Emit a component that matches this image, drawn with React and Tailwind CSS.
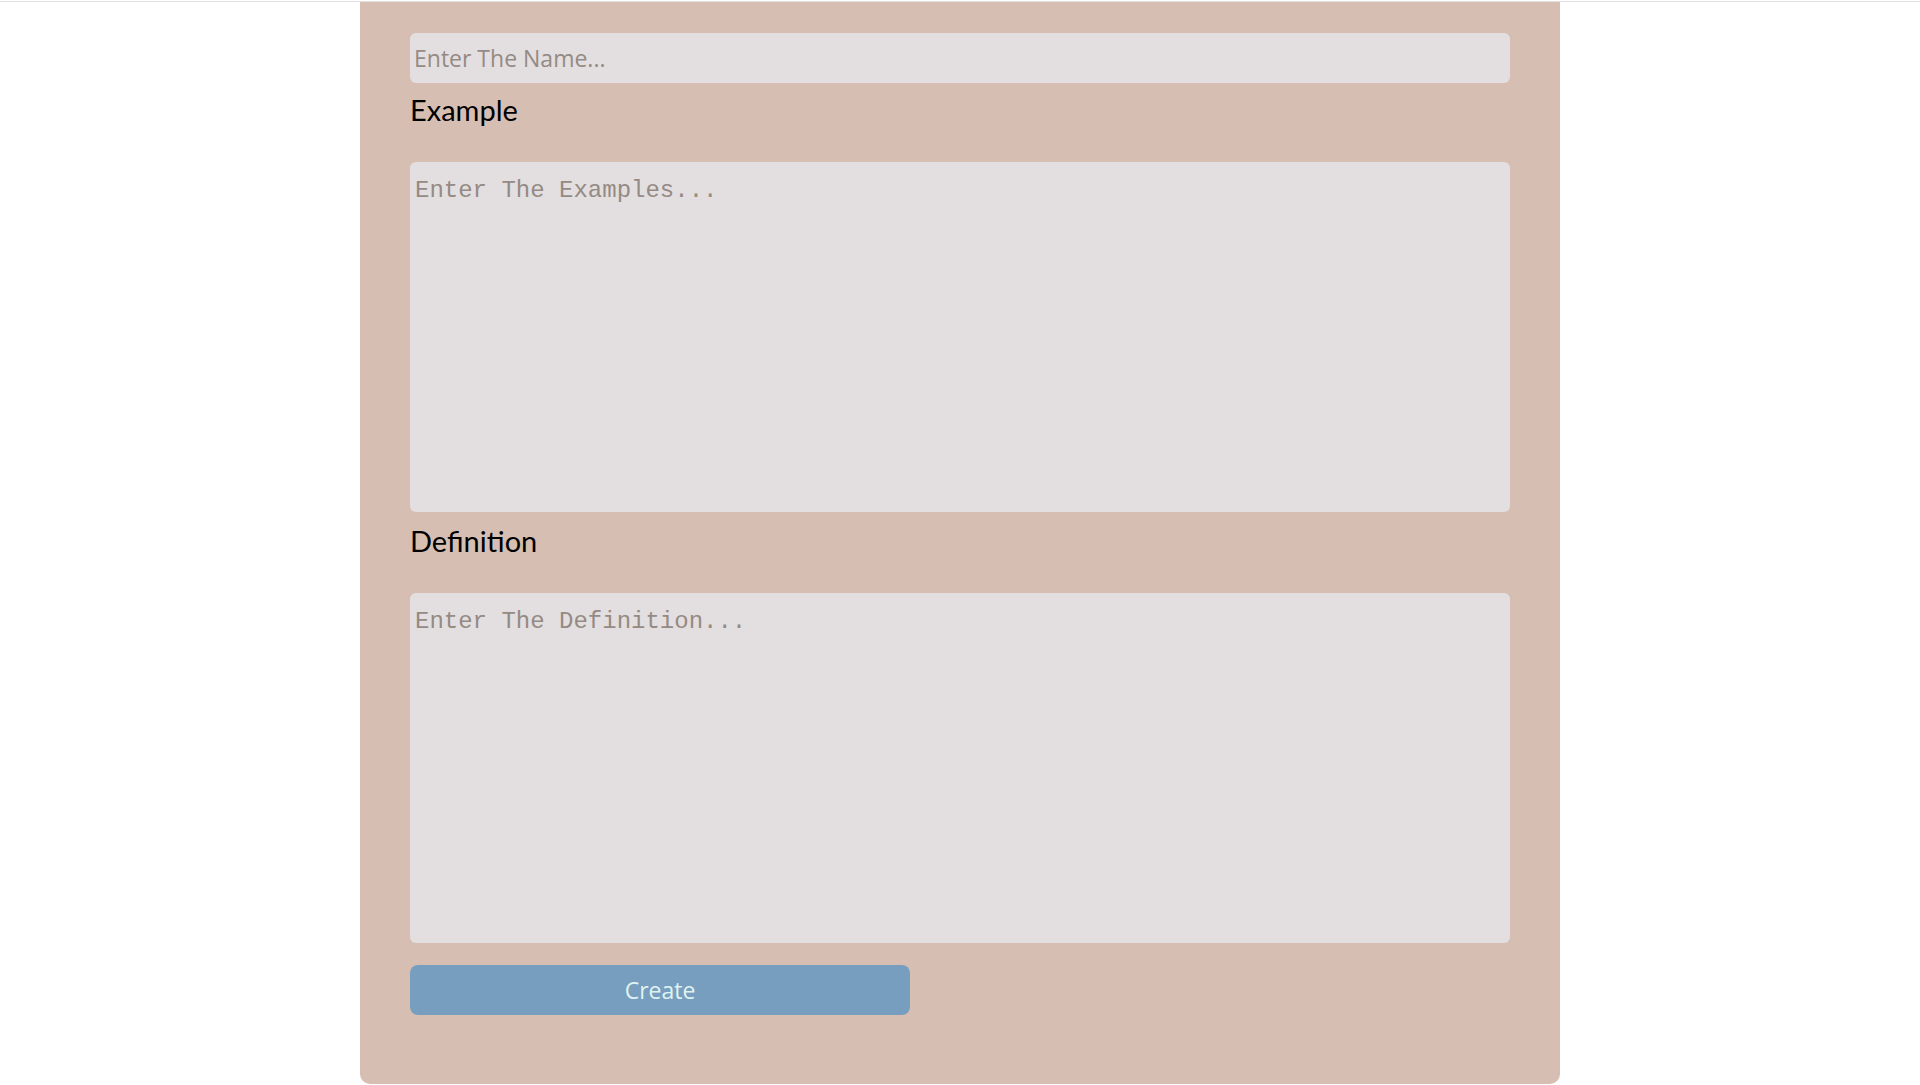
import { useState } from 'react'

export default function App() {
  const [name, setName] = useState('')
  const [examples, setExamples] = useState('')
  const [definition, setDefinition] = useState('')

  return (
    <div className="min-h-[1085px] bg-white">
      {/* top rule */}
      <div className="h-px bg-white" />
      <div className="h-px bg-[#e0e0e0]" />

      {/* Form panel */}
      <div className="mx-auto w-[1200px] rounded-b-[10px] bg-[#d6bfb2] px-[50px] pt-[31px] pb-[69px]">
        <input
          value={name}
          onChange={(e) => setName(e.target.value)}
          placeholder="Enter The Name..."
          className="block h-[50px] w-full rounded-[6px] bg-[#e3dfe0] px-[4px] font-['Open_Sans',sans-serif] text-[23px] text-black outline-none placeholder:text-[#958a84]"
        />

        <div className="mt-[10px] mb-[35px] font-['Lato',sans-serif] text-[29px] leading-[34px] text-black">
          Example
        </div>

        <textarea
          value={examples}
          onChange={(e) => setExamples(e.target.value)}
          placeholder="Enter The Examples..."
          className="block h-[350px] w-full resize-none rounded-[6px] bg-[#e3dfe0] p-[5px] font-['Liberation_Mono',monospace] text-[24px] leading-[48px] text-black outline-none placeholder:text-[#958a84]"
        />

        <div className="mt-[12px] mb-[35px] font-['Lato',sans-serif] text-[29px] leading-[34px] text-black">
          Definition
        </div>

        <textarea
          value={definition}
          onChange={(e) => setDefinition(e.target.value)}
          placeholder="Enter The Definition..."
          className="block h-[350px] w-full resize-none rounded-[6px] bg-[#e3dfe0] p-[5px] font-['Liberation_Mono',monospace] text-[24px] leading-[48px] text-black outline-none placeholder:text-[#958a84]"
        />

        <button className="mt-[22px] block h-[50px] w-[500px] rounded-[8px] bg-[#789ebf] font-['Open_Sans',sans-serif] text-[23px] text-[#dff3f1]">
          Create
        </button>
      </div>
    </div>
  )
}
